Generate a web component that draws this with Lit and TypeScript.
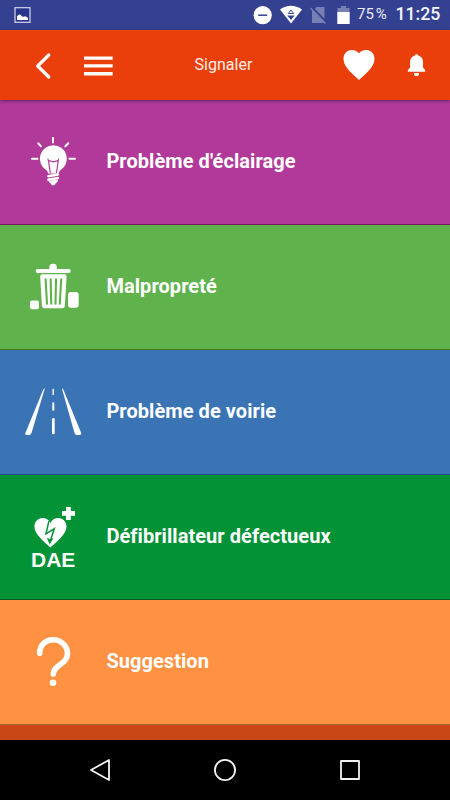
import { LitElement, html, svg, css, SVGTemplateResult } from "lit";
import { customElement, property } from "lit/decorators.js";
import { classMap } from "lit/directives/class-map.js";

type Kind = "light" | "litter" | "road" | "aed" | "idea";

const ICONS: Record<Kind, SVGTemplateResult> = {
  light: svg`
    <g stroke="#fff" stroke-width="2" stroke-linecap="round" fill="none">
      <path d="M53 38V42.500M32 58.700H37.500M69.500 58.700H75M38.300 43.300L41 46.300M68.300 43.300L65.300 46.300"/>
    </g>
    <path fill="#fff" d="M53.300 45.200a13.500 13.500 0 0 1 7.300 24.900c-1 .8-1.600 2-2 3.300H48.100c-.3-1.400-1-2.600-2-3.300a13.500 13.500 0 0 1 7.200-24.900z"/>
    <path d="M50.300 73L48.500 60.500l4.800 1.400 5-1.400L56.500 73" fill="none" stroke="#b03999" stroke-width="1.200"/>
    <path d="M48.300 60.500l-.4-2M58.300 60.500l.5-2" stroke="#b03999" stroke-width="1"/>
    <path d="M48.300 76.200L58 74.500M48.300 79.700L58 78" stroke="#fff" stroke-width="2.400" stroke-linecap="round"/>
    <path fill="#fff" d="M48.800 80.800L58 79.400c0 2.500-1.200 3.200-2.200 3.700-.5 1.300-1.200 2.300-2.700 2.300-1.400 0-2.200-1-2.500-2.200-1.100-.4-1.800-1-1.800-2.400z"/>`,
  litter: svg`
    <g fill="#fff">
      <path d="M49.400 44.500v-2.500a3.700 3.200 0 0 1 7.400 0v2.500z"/>
      <rect x="35.700" y="44" width="35" height="4" rx="2"/>
      <path d="M42.300 49.200h22.200q2.200 0 2.100 2.200l-1.700 29.300q-.2 2.500-2.600 2.500H44.500q-2.400 0-2.600-2.500l-1.700-29.300q-.1-2.200 2.100-2.200z"/>
      <rect x="30" y="75.600" width="9" height="8.600" rx="2"/>
      <rect x="68" y="67" width="10.700" height="15.800" rx="3"/>
    </g>
    <path fill="none" stroke="#60b24d" stroke-width="2.100" stroke-linecap="round" d="M45.600 54.200L47 78.800M50.700 54.200L51.200 78.800M56 54.200L55.500 78.800M61.200 54.200L59.800 78.800"/>`,
  road: svg`
    <g fill="#fff">
      <path d="M44.800 38.500L31.500 83q-.6 1.900-2.500 1.900h-2.500q-1.700 0-1.200-1.700L43.300 39.500q.6-1 1.500-1z"/>
      <path d="M61.900 38.500L74.500 83q.5 1.900 2.500 1.900h3q1.800 0 1.200-1.800L63.300 39.500q-.5-1-1.400-1z"/>
      <rect x="52.500" y="38.800" width="1.400" height="6.200" rx=".6"/>
      <rect x="52.300" y="52.200" width="2" height="8.600" rx=".8"/>
      <rect x="52" y="68" width="2.700" height="16.300" rx="1.200"/>
    </g>`,
  aed: svg`
    <path fill="#fff" d="M50.400 72.400C45 67.500 34.400 59.200 34.400 51.400c0-4.900 3.600-8.500 8-8.500 3.600 0 6.500 1.800 8 5 1.600-3.200 4.500-5 8-5 4.500 0 8.100 3.600 8.100 8.500 0 7.800-10.700 16.100-16.100 21z"/>
    <path fill="none" stroke="#039236" stroke-width="1.500" d="M48.900 46.200L46 58.800 54.300 53.800 50.300 66"/>
    <path fill="#039236" d="M46.800 62.800L50 64.300l3.400-1.300-3.700 6.500z"/>
    <path fill="#fff" d="M66 32h4.800v4.100h4.200v4.600h-4.200V45H66v-4.300h-4v-4.600h4z"/>
    <text class="dae" x="31" y="92">DAE</text>`,
  idea: svg`
    <path fill="none" stroke="#fff" stroke-width="5.600" stroke-linecap="round" d="M39.700 53.200C39.700 44.800 45.700 39.800 53.300 39.800S67.500 45.800 67.500 53.400C67.500 64.500 53.500 64.700 53.300 74"/>
    <circle cx="53" cy="82.800" r="3.300" fill="#fff"/>`,
};

@customElement("report-row")
export class ReportRow extends LitElement {
  @property() kind: Kind = "light";
  @property() label = "";

  static styles = css`
    :host { display: block; }
    .row { height: 125px; box-sizing: border-box; display: flex; align-items: center; border-bottom: 1px solid; }
    .light { background: #b03999; border-color: #73175f; }
    .litter { background: #60b24d; border-color: #3c7a1c; }
    .road { background: #3a74b4; border-color: #1d4a80; }
    .aed { background: #039236; border-color: #0b5a22; }
    .idea { background: #ff9143; border-color: #a96a2c; }
    svg { width: 106.400px; height: 124px; flex: none; }
    .dae { font: bold 21px "Liberation Sans", sans-serif; fill: #fff; }
    .label { font: 700 20px/24px Roboto, sans-serif; letter-spacing: .06px; color: #fff; white-space: nowrap; padding-bottom: 2px; }
  `;

  render() {
    return html`<div class=${classMap({ row: true, [this.kind]: true })}>
      <svg viewBox="0 0 106.400 124">${ICONS[this.kind]}</svg>
      <span class="label">${this.label}</span>
    </div>`;
  }
}

@customElement("app-root")
export class AppRoot extends LitElement {
  static styles = css`
    :host { display: flex; flex-direction: column; width: 450px; height: 800px; overflow: hidden; background: #c94616; font-family: Roboto, sans-serif; color: #fff; }
    svg { display: block; flex: none; }
    .status { height: 30px; flex: none; background: #344190; display: flex; align-items: center; justify-content: space-between; }
    .right { display: flex; align-items: center; height: 30px; }
    .pct { font-size: 15px; line-height: 20px; width: 38.500px; white-space: nowrap; padding-bottom: 2px; letter-spacing: .3px; color: #e8eaf5; }
    .time { font-size: 17.700px; font-weight: 500; line-height: 22px; padding-bottom: 2px; width: 54.500px; color: #f4f5fb; }
    .bar { height: 70px; flex: none; background: #ea3f0a; display: grid; grid-template-columns: 150px 147px 153px; align-items: center; box-shadow: 0 1px 3px rgba(40, 20, 70, .6); position: relative; }
    .title { font-size: 16px; line-height: 20px; text-align: center; letter-spacing: .05px; color: #ffeee8; }
    .list { flex: 1; overflow: hidden; }
    .nav { height: 60px; flex: none; background: #000; }
  `;

  render() {
    return html`
      <div class="status">
        <svg width="40" height="30" viewBox="0 0 40 30">
          <rect x="15" y="7.700" width="15" height="14.600" fill="#27348a" stroke="#c9cce5" stroke-width="1.300"/>
          <path fill="#fff" d="M17 20v-4l1-.5 1.200-1 1.300.2 1.500 1.800 1.700.3 1.500-.6 1.300.5.500 1 1-.2V20z"/>
        </svg>
        <div class="right">
          <svg width="107" height="30" viewBox="250 0 107 30">
            <circle cx="262.700" cy="15.200" r="9.100" fill="#fff"/>
            <path stroke="#344190" stroke-width="1.500" d="M258.200 15.200h9"/>
            <path fill="#fff" d="M280 9.500Q291 2 302 9.500L291 23.500z"/>
            <path fill="none" stroke="#344190" d="M288.300 13.500L291 10l2.700 3.500z"/>
            <path fill="#344190" d="M287.300 15.500h7.400L291 20z"/>
            <path fill="#7780b5" d="M316.500 7h8v16h-12.500V11.200z"/>
            <path stroke="#344190" stroke-width="2.500" d="M312 7.500L327 23"/>
            <path stroke="#7780b5" stroke-width="1.300" d="M310.500 8L325.500 23.500"/>
            <path fill="#7780b5" d="M341 6h5v2h3.500v5H337.500V8h3.500z"/>
            <path fill="#fff" d="M337.300 12h12.400v12h-12.400z"/>
          </svg>
          <span class="pct">75&#8239;%</span>
          <span class="time">11:25</span>
        </div>
      </div>
      <div class="bar">
        <svg width="150" height="70" viewBox="0 30 150 70">
          <path fill="none" stroke="#fff" stroke-width="3.200" stroke-linecap="round" stroke-linejoin="round" d="M48.800 55L37.700 66l11.100 11"/>
          <path fill="#fff" d="M84 56.500h28.700v3.300H84zM84 64.300h28.700v3.300H84zM84 72h28.700v3.500H84z"/>
        </svg>
        <span class="title">Signaler</span>
        <svg width="153" height="70" viewBox="297 30 153 70">
          <path fill="#fff" d="M359 80C353 74.500 343.500 67.500 343.500 58.800c0-5 3.700-8.800 8-8.800 3.500 0 6.300 1.200 7.500 3.500 1.200-2.300 4-3.500 7.500-3.500 4.500 0 8 3.800 8 8.800C374.500 67.500 365 74.500 359 80z"/>
          <path fill="#fff" d="M416.500 54.200c1 0 1.600.6 1.700 1.400 3.200.8 4.800 3.200 4.800 6.500v5.300l2.200 2.700v1.700h-17.300v-1.700l2.200-2.700v-5.300c0-3.300 1.600-5.700 4.800-6.500.1-.8.700-1.400 1.600-1.400zM413.900 72.900h5.200a2.600 3.200 0 0 1-5.200 0z"/>
        </svg>
      </div>
      <div class="list">
        <report-row kind="light" label="Problème d'éclairage"></report-row>
        <report-row kind="litter" label="Malpropreté"></report-row>
        <report-row kind="road" label="Problème de voirie"></report-row>
        <report-row kind="aed" label="Défibrillateur défectueux"></report-row>
        <report-row kind="idea" label="Suggestion"></report-row>
      </div>
      <div class="nav">
        <svg width="450" height="60" viewBox="0 740 450 60" fill="none" stroke="#f2f2f2" stroke-width="1.800" stroke-linejoin="round">
          <path d="M109 760v20l-18-10z"/>
          <circle cx="225" cy="770" r="10.100"/>
          <rect x="341" y="761" width="18" height="18"/>
        </svg>
      </div>`;
  }
}
